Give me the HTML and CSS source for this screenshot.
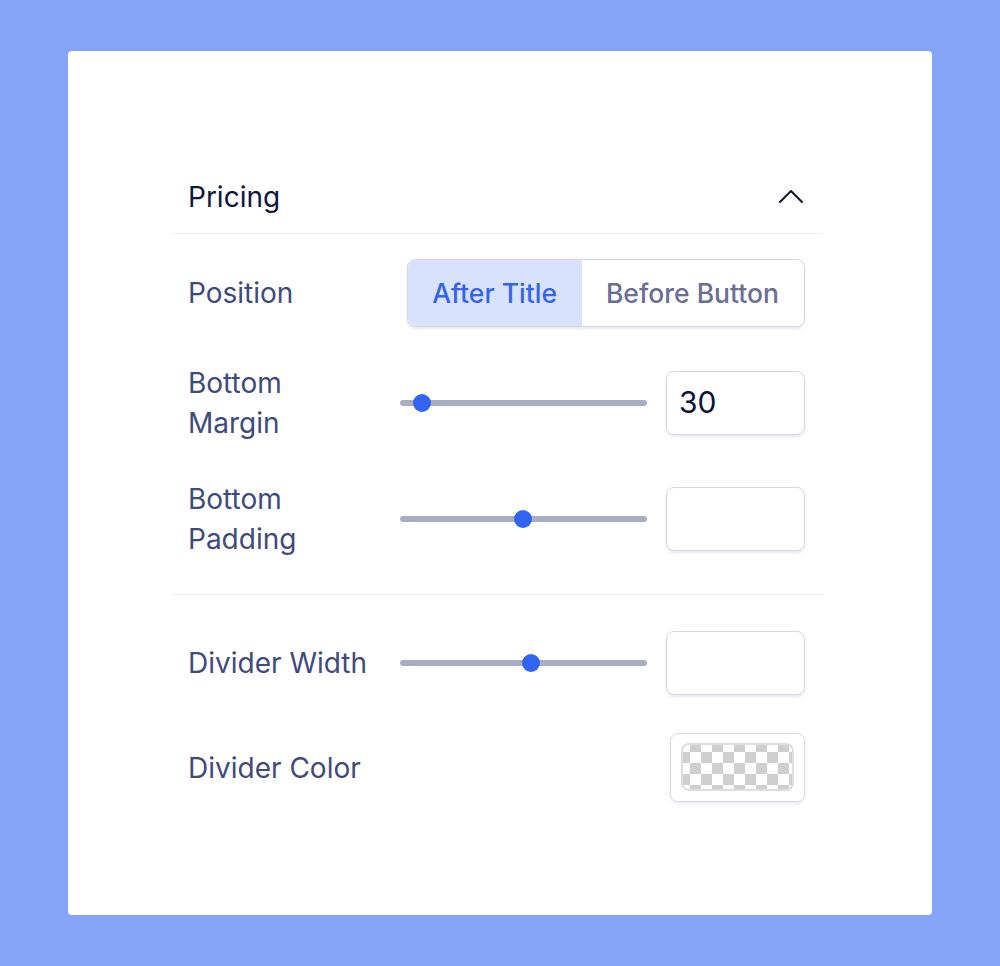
FILE: index.html
```html
<!DOCTYPE html>
<html lang="en">

<head>
  <meta charset="UTF-8">
  <meta name="viewport" content="width=device-width, initial-scale=1.0">
  <title>Pricing Settings</title>
  <link rel="stylesheet" href="styles.css">
</head>

<body>
  <div class="card">
    <div class="panel">
      <div class="panel-header">
        <span class="panel-title">Pricing</span>
        <svg class="chevron" width="26" height="16" viewBox="0 0 26 16">
          <path d="M2 14 L13 3 L24 14" fill="none" stroke="#101530" stroke-width="2" stroke-linecap="round" stroke-linejoin="round" />
        </svg>
      </div>

      <div class="section">
        <div class="row row-position">
          <div class="label">Position</div>
          <div class="segmented">
            <div class="segment active">After Title</div>
            <div class="segment">Before Button</div>
          </div>
        </div>

        <div class="row row-tall">
          <div class="label">Bottom<br>Margin</div>
          <div class="slider">
            <div class="track"></div>
            <div class="thumb" style="left: 9%"></div>
          </div>
          <div class="number">30</div>
        </div>

        <div class="row row-tall">
          <div class="label">Bottom<br>Padding</div>
          <div class="slider">
            <div class="track"></div>
            <div class="thumb" style="left: 49.8%"></div>
          </div>
          <div class="number"></div>
        </div>
      </div>

      <div class="section section-divider">
        <div class="row">
          <div class="label">Divider Width</div>
          <div class="slider">
            <div class="track"></div>
            <div class="thumb" style="left: 53%"></div>
          </div>
          <div class="number"></div>
        </div>

        <div class="row row-color">
          <div class="label">Divider Color</div>
          <div class="swatch">
            <div class="checker"></div>
          </div>
        </div>
      </div>
    </div>
  </div>
</body>

</html>
```

FILE: styles.css
```css
body {
  margin: 0;
  background-color: #85a3f7;
  font-family: Inter, "Noto Sans", sans-serif;
}

.card {
  margin: 51px 68px;
  height: 864px;
  background-color: white;
  border-radius: 4px;
  box-sizing: border-box;
  padding: 109px 0 0 104px;
}

.panel {
  width: 651px;
}

.panel-header {
  display: flex;
  align-items: center;
  justify-content: space-between;
  height: 73px;
  padding: 0 19px 0 16px;
  border-bottom: 1.5px solid #eceef3;
}

.panel-title {
  font-size: 28px;
  color: #0f1640;
}

.chevron {
  margin-top: -2px;
}

.section {
  display: flex;
  flex-direction: column;
  gap: 36px;
  padding: 25px 18px 35px 16px;
}

.section-divider {
  border-top: 1.5px solid #eceef3;
  padding-top: 36px;
  gap: 38px;
}

.row {
  display: grid;
  grid-template-columns: 193px 247px 1fr;
  column-gap: 19px;
  align-items: center;
  height: 64px;
}

.row-position {
  height: 68px;
}

.row-tall {
  height: 80px;
}

.row-color {
  height: 69px;
}

.label {
  font-size: 28px;
  line-height: 40px;
  color: #3f4a7d;
  white-space: nowrap;
}

.segmented {
  grid-column: 2 / 4;
  justify-self: end;
  display: flex;
  height: 68px;
  box-sizing: border-box;
  border: 1.5px solid #d3d5e1;
  border-radius: 8px;
  overflow: hidden;
  box-shadow: 0 2px 3px rgba(60, 70, 120, 0.12);
}

.segment {
  display: flex;
  align-items: center;
  padding: 0 25px 0 24px;
  font-size: 26.5px;
  font-weight: 500;
  color: #6b6d96;
}

.segment.active {
  background-color: #d8e2fd;
  color: #3464e8;
}

.slider {
  position: relative;
  height: 20px;
}

.track {
  position: absolute;
  left: 0;
  right: 0;
  top: 7px;
  height: 6px;
  border-radius: 3px;
  background-color: #a9adc4;
}

.thumb {
  position: absolute;
  top: 1px;
  width: 18px;
  height: 18px;
  margin-left: -9px;
  border-radius: 50%;
  background-color: #3264f2;
}

.number {
  height: 64px;
  box-sizing: border-box;
  border: 1.5px solid #d5d7e3;
  border-radius: 8px;
  box-shadow: 0 2px 3px rgba(60, 70, 120, 0.12);
  padding: 0 12px;
  font-size: 30px;
  line-height: 61px;
  color: #0d1238;
}

.swatch {
  grid-column: 3;
  justify-self: end;
  width: 135px;
  height: 69px;
  box-sizing: border-box;
  border: 1.5px solid #d9dae3;
  border-radius: 8px;
  box-shadow: 0 2px 3px rgba(60, 70, 120, 0.1);
  padding: 9px 10px;
}

.checker {
  height: 48px;
  box-sizing: border-box;
  border: 2px solid #dedede;
  border-radius: 8px;
  background-color: #ffffff;
  background-image: conic-gradient(#cfcfcf 25%, #ffffff 0 50%, #cfcfcf 0 75%, #ffffff 0);
  background-size: 22px 22px;
  background-position: -4px -4px;
}
```
